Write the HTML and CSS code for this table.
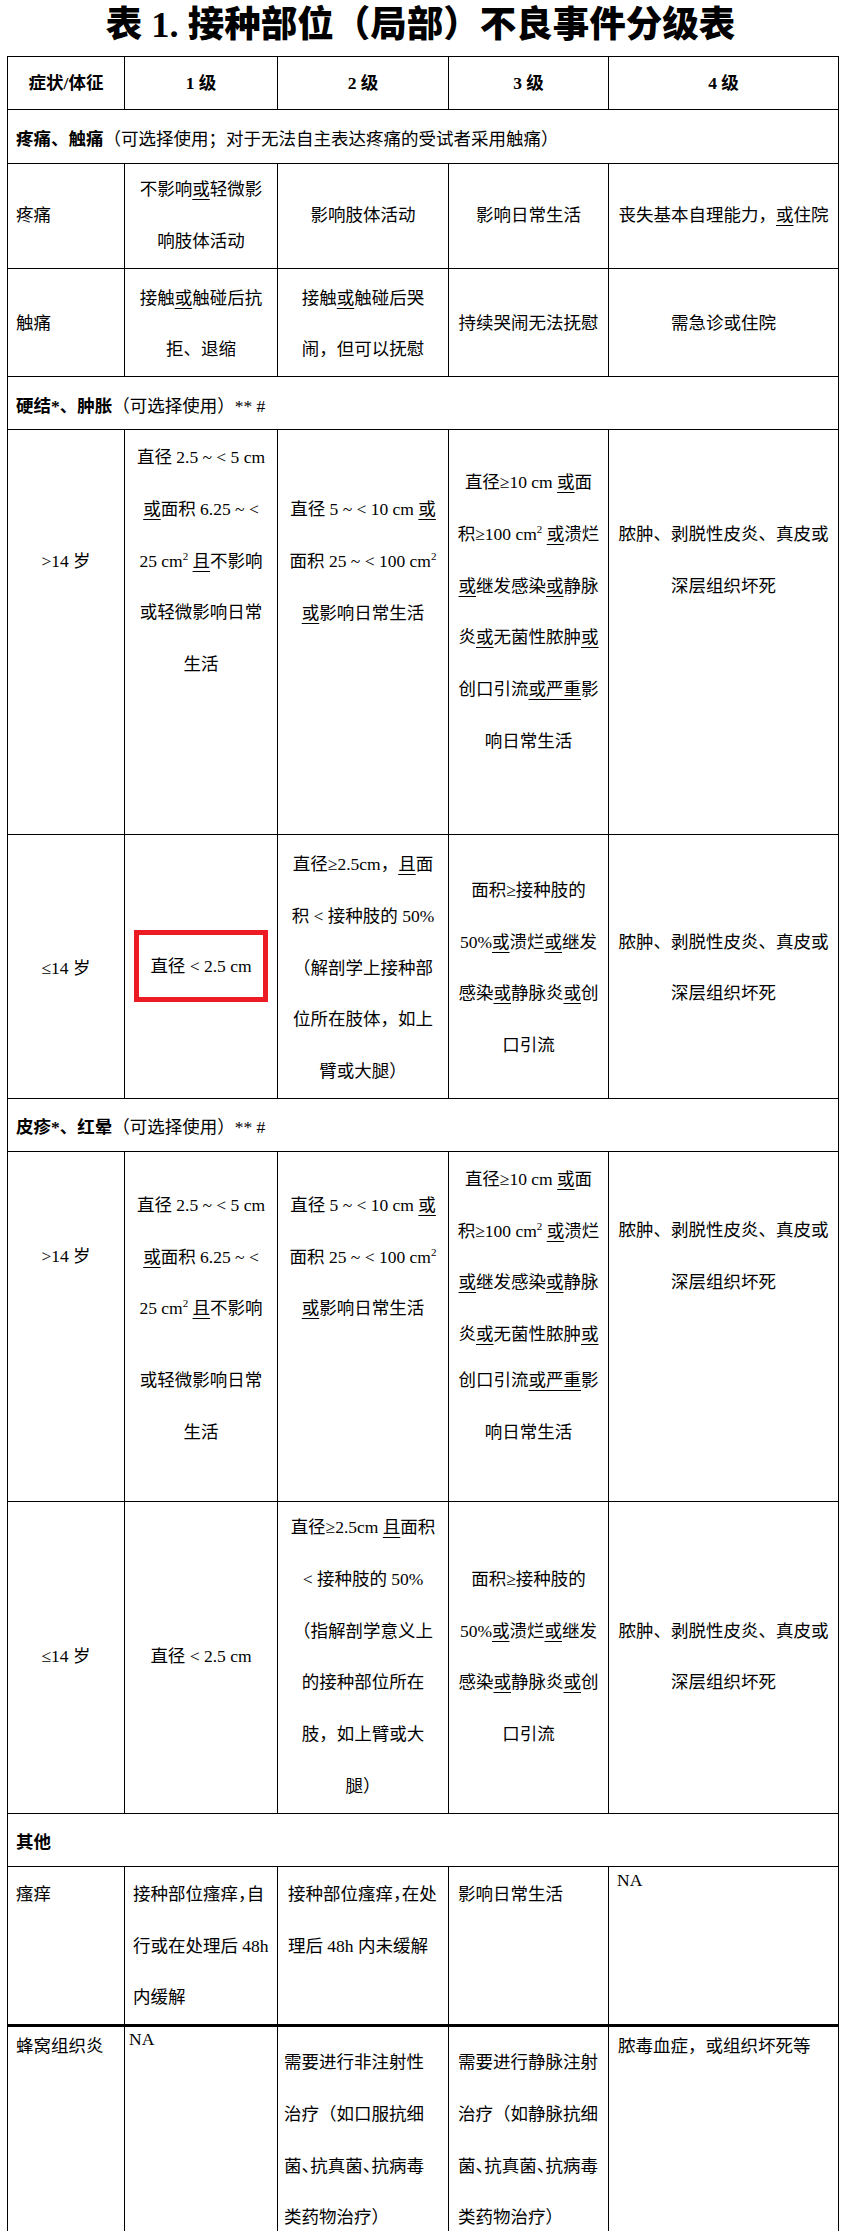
FILE: index.html
```html
<!DOCTYPE html>
<html lang="zh-CN">
<head>
<meta charset="utf-8">
<title>接种部位（局部）不良事件分级表</title>
<link rel="stylesheet" href="styles.css">
</head>
<body>
<h1 class="title">表 1. 接种部位（局部）不良事件分级表</h1>
<table class="grid">
  <colgroup>
    <col class="c0"><col class="c1"><col class="c2"><col class="c3"><col class="c4">
  </colgroup>
  <thead>
    <tr class="r-head"><th>症状/体征</th><th>1 级</th><th>2 级</th><th>3 级</th><th>4 级</th></tr>
  </thead>
  <tbody>
    <tr class="r-sec r-sec-first"><td colspan="5"><b>疼痛、触痛</b>（可选择使用；对于无法自主表达疼痛的受试者采用触痛）</td></tr>
    <tr class="r-2l">
      <td class="lbl">疼痛</td>
      <td>不影响<u>或</u>轻微影<br>响肢体活动</td>
      <td>影响肢体活动</td>
      <td>影响日常生活</td>
      <td>丧失基本自理能力，<u>或</u>住院</td>
    </tr>
    <tr class="r-2l r-touch">
      <td class="lbl">触痛</td>
      <td>接触<u>或</u>触碰后抗<br>拒、退缩</td>
      <td>接触<u>或</u>触碰后哭<br>闹，但可以抚慰</td>
      <td>持续哭闹无法抚慰</td>
      <td>需急诊或住院</td>
    </tr>
    <tr class="r-sec"><td colspan="5"><b>硬结*、肿胀</b>（可选择使用）** #</td></tr>
    <tr class="r-hard-a top">
      <td class="pt-106">&gt;14 岁</td>
      <td class="pt-2">直径 2.5 ~ &lt; 5 cm<br><u>或</u>面积 6.25 ~ &lt;<br>25 cm<sup class="sq">2</sup> <u>且</u>不影响<br>或轻微影响日常<br>生活</td>
      <td class="pt-54">直径 5 ~ &lt; 10 cm <u>或</u><br>面积 25 ~ &lt; 100 cm<sup class="sq">2</sup><br><u>或</u>影响日常生活</td>
      <td class="pt-27">直径≥10 cm <u>或</u>面<br>积≥100 cm<sup class="sq">2</sup> <u>或</u>溃烂<br><u>或</u>继发感染<u>或</u>静脉<br>炎<u>或</u>无菌性脓肿<u>或</u><br>创口引流<u>或严重</u>影<br>响日常生活</td>
      <td class="pt-79">脓肿、剥脱性皮炎、真皮或<br>深层组织坏死</td>
    </tr>
    <tr class="r-hard-b">
      <td>≤14 岁</td>
      <td class="pt-0"><span class="mark">直径 &lt; 2.5 cm</span></td>
      <td>直径≥2.5cm，<u>且</u>面<br>积 &lt; 接种肢的 50%<br>（解剖学上接种部<br>位所在肢体，如上<br>臂或大腿）</td>
      <td>面积≥接种肢的<br>50%<u>或</u>溃烂<u>或</u>继发<br>感染<u>或</u>静脉炎<u>或</u>创<br>口引流</td>
      <td>脓肿、剥脱性皮炎、真皮或<br>深层组织坏死</td>
    </tr>
    <tr class="r-sec"><td colspan="5"><b>皮疹*、红晕</b>（可选择使用）** #</td></tr>
    <tr class="r-rash-a top">
      <td class="pt-79">&gt;14 岁</td>
      <td class="pt-28"><div>直径 2.5 ~ &lt; 5 cm<br><u>或</u>面积 6.25 ~ &lt;<br>25 cm<sup class="sq">2</sup> <u>且</u>不影响</div><div class="cont-gap">或轻微影响日常<br>生活</div></td>
      <td class="pt-28">直径 5 ~ &lt; 10 cm <u>或</u><br>面积 25 ~ &lt; 100 cm<sup class="sq">2</sup><br><u>或</u>影响日常生活</td>
      <td class="pt-2"><div>直径≥10 cm <u>或</u>面<br>积≥100 cm<sup class="sq">2</sup> <u>或</u>溃烂<br><u>或</u>继发感染<u>或</u>静脉<br>炎<u>或</u>无菌性脓肿<u>或</u></div><div class="cont-pull">创口引流<u>或严重</u>影<br>响日常生活</div></td>
      <td class="pt-53">脓肿、剥脱性皮炎、真皮或<br>深层组织坏死</td>
    </tr>
    <tr class="r-rash-b">
      <td>≤14 岁</td>
      <td>直径 &lt; 2.5 cm</td>
      <td>直径≥2.5cm <u>且</u>面积<br>&lt; 接种肢的 50%<br>（指解剖学意义上<br>的接种部位所在<br>肢，如上臂或大<br>腿）</td>
      <td>面积≥接种肢的<br>50%<u>或</u>溃烂<u>或</u>继发<br>感染<u>或</u>静脉炎<u>或</u>创<br>口引流</td>
      <td>脓肿、剥脱性皮炎、真皮或<br>深层组织坏死</td>
    </tr>
    <tr class="r-sec"><td colspan="5"><b>其他</b></td></tr>
    <tr class="r-itch top left">
      <td class="pl-8 pt-2">瘙痒</td>
      <td class="pl-8 pt-2">接种部位瘙痒<span class="h">，</span>自<br>行或在处理后 48h<br>内缓解</td>
      <td class="pl-10 pt-2">接种部位瘙痒<span class="h">，</span>在处<br>理后 48h 内未缓解</td>
      <td class="pl-9 pt-2">影响日常生活</td>
      <td class="pl-8 pt-3 na">NA</td>
    </tr>
    <tr class="r-cell top left">
      <td class="pl-8 pt-7 short">蜂窝组织炎</td>
      <td class="pl-4 pt-2 na">NA</td>
      <td class="pl-6 pt-10">需要进行非注射性<br>治疗（如口服抗细<br>菌<span class="h">、</span>抗真菌<span class="h">、</span>抗病毒<br>类药物治疗）</td>
      <td class="pl-9 pt-10">需要进行静脉注射<br>治疗（如静脉抗细<br>菌<span class="h">、</span>抗真菌<span class="h">、</span>抗病毒<br>类药物治疗）</td>
      <td class="pl-9 pt-7 short">脓毒血症，或组织坏死等</td>
    </tr>
  </tbody>
</table>
</body>
</html>
```
FILE: styles.css
```css
* { box-sizing: border-box; }
html, body { margin: 0; padding: 0; background: #fff; }
body {
  font-family: "Liberation Serif", "Noto Sans CJK SC", serif;
  color: #000;
  width: 841px;
}

.title {
  margin: 0;
  height: 56px;
  line-height: 50px;
  font-size: 36.5px;
  font-weight: 900;
  text-align: center;
  white-space: nowrap;
}

.grid {
  border-collapse: collapse;
  table-layout: fixed;
  width: 831px;
  margin-left: 7px;
  font-size: 17.5px;
}
.c0 { width: 117px; }
.c1 { width: 153px; }
.c2 { width: 171px; }
.c3 { width: 160px; }
.c4 { width: 230px; }

.grid th,
.grid td {
  border: 1px solid #000;
  padding: 0;
  text-align: center;
  vertical-align: middle;
  line-height: 51.75px;
  white-space: nowrap;
  font-weight: 400;
}
.grid th { font-weight: 700; line-height: 30px; }

.grid u { text-decoration: underline; text-underline-offset: 4px; text-decoration-thickness: 1px; }
.grid .sq { font-size: 11px; line-height: 0; vertical-align: 7px; }
.grid .h { font-feature-settings: "halt" 1; }

.r-head { height: 53px; }
.r-sec { height: 53px; }
.r-sec-first { height: 54px; }
.grid .r-sec td { text-align: left; padding: 5px 0 0 8px; line-height: 30px; }
.r-sec b { font-weight: 700; }

.r-2l { height: 104px; }
.grid .r-touch td { padding-top: 4px; }
.grid td.lbl { text-align: left; padding-left: 8px; }

.r-hard-a { height: 405px; }
.r-hard-b { height: 261px; }
.grid .r-hard-b td { padding-top: 4px; }
.r-rash-a { height: 350px; }
.r-rash-b { height: 312px; }
.r-itch { height: 156px; }
.grid .r-itch td { border-bottom: 3px solid #000; }
.r-cell { height: 210px; }

.grid .top td { vertical-align: top; }
.grid .left td { text-align: left; }

.grid td.pt-0 { padding-top: 0; }
.grid td.pt-2 { padding-top: 2px; }
.grid td.pt-3 { padding-top: 3px; }
.grid td.pt-7 { padding-top: 7px; }
.grid td.pt-10 { padding-top: 10px; }
.grid td.pt-27 { padding-top: 27px; }
.grid td.pt-28 { padding-top: 28px; }
.grid td.pt-53 { padding-top: 53px; }
.grid td.pt-54 { padding-top: 54px; }
.grid td.pt-79 { padding-top: 79px; }
.grid td.pt-106 { padding-top: 106px; }

.grid td.pl-4 { padding-left: 4px; }
.grid td.pl-6 { padding-left: 6px; }
.grid td.pl-8 { padding-left: 8px; }
.grid td.pl-9 { padding-left: 9px; }
.grid td.pl-10 { padding-left: 10px; }

.grid td.na { line-height: 20px; }
.grid td.short { line-height: 24px; }

.cont-gap { margin-top: 20px; }
.cont-pull { margin-top: -6px; }

.mark {
  display: inline-block;
  width: 134px;
  height: 72px;
  border: 5px solid #ed1c24;
  line-height: 62px;
  vertical-align: middle;
}
```
